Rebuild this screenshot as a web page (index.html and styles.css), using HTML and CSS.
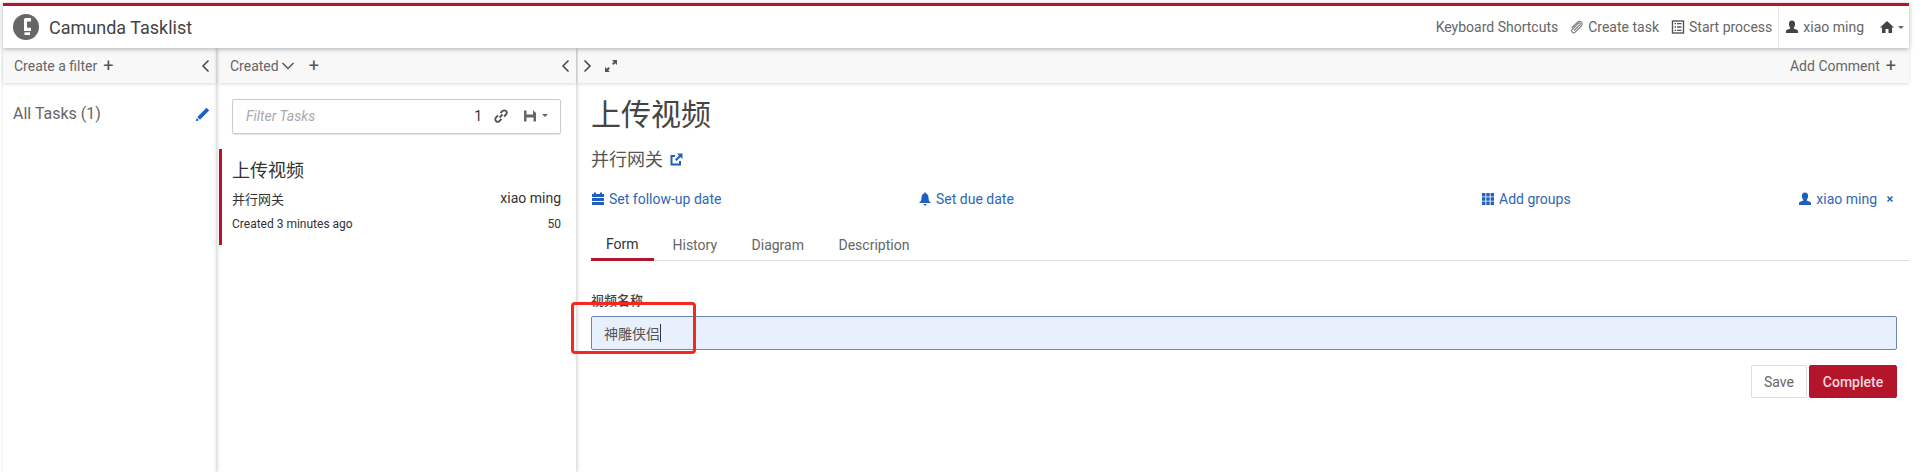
FILE: index.html
```html
<!DOCTYPE html>
<html lang="zh">
<head>
<meta charset="utf-8">
<title>Camunda Tasklist</title>
<link rel="stylesheet" href="styles.css">
</head>
<body>
<div class="app">
  <header class="top">
    <div class="brand">
      <svg class="logo" viewBox="0 0 26 26"><circle cx="13" cy="13" r="13" fill="#666"/><path d="M18 7.500V4H12.500Q11 4 11 5.500V17H18V13.800H14V7.500Z" fill="#fff"/><rect x="11.500" y="18.300" width="5.500" height="2.700" fill="#fff"/></svg>
      <span class="brand-name">Camunda Tasklist</span>
    </div>
    <nav class="top-nav">
      <span class="nav-item shortcuts">Keyboard Shortcuts</span>
      <span class="nav-item create">
        <svg class="ic" viewBox="0 0 14 14"><path d="M1.800 7.800 7.500 2.100a2.700 2.700 0 0 1 3.900 3.800L5.200 12.100a2 2 0 0 1-2.900-2.800L8.400 3.200a1 1 0 0 1 1.500 1.400L4 10.500" fill="none" stroke="#777" stroke-width="1.100"/></svg>
        Create task
      </span>
      <span class="nav-item start">
        <svg class="ic" viewBox="0 0 14 14"><rect x="1.500" y="1" width="11" height="12" fill="none" stroke="#555" stroke-width="1.400"/><path d="M3.500 3.700h1.500M3.500 7h1.500M3.500 10.300h1.500M6 3.700h4.500M6 7h4.500M6 10.300h4.500" stroke="#555" stroke-width="1.300"/></svg>
        Start process
      </span>
      <span class="nav-sep"></span>
      <span class="nav-item user">
        <svg class="ic" viewBox="0 0 14 14"><path d="M7 .5c2 0 3.100 1.500 3.100 3.500S9 7.400 8.600 8c0 1 3.900 1.400 4.400 2.800V13H1v-2.200C1.500 9.400 5.400 9 5.400 8 5 7.400 3.900 6 3.900 4S5 .5 7 .5Z" fill="#444"/></svg>
        xiao ming
      </span>
      <span class="nav-item home">
        <svg class="ic" viewBox="0 0 14 14"><path d="M7 1 14 7.500H12V13H8.500V9h-3v4H2V7.500H0Z" fill="#444"/></svg>
        <i class="caret"></i>
      </span>
    </nav>
  </header>
  <main class="cols">
    <section class="col filters">
      <div class="bar">
        <span>Create a filter</span><span class="plus">+</span>
        <svg class="chev push" viewBox="0 0 10 14"><path d="M7.500 1.500 2 7l5.500 5.500" fill="none" stroke="#444" stroke-width="1.500"/></svg>
      </div>
      <div class="filter-row">
        <span>All Tasks (1)</span>
        <svg class="pencil" viewBox="0 0 15 15"><path d="M11.500.8 14.200 3.500 5 12.700 2.300 10ZM1.700 11 4 13.300.7 14.300Z" fill="#1f5fbf"/></svg>
      </div>
    </section>
    <section class="col list">
      <div class="bar">
        <span>Created</span>
        <svg class="down" viewBox="0 0 14 10"><path d="M1.500 2 7 7.500 12.500 2" fill="none" stroke="#555" stroke-width="1.500"/></svg>
        <span class="plus wide">+</span>
        <svg class="chev push" viewBox="0 0 10 14"><path d="M7.500 1.500 2 7l5.500 5.500" fill="none" stroke="#444" stroke-width="1.500"/></svg>
      </div>
      <div class="search">
        <span class="search-ph">Filter Tasks</span>
        <span class="count">1</span>
        <svg class="ic link" viewBox="0 0 14 14"><path d="M5.500 8.500 8.500 5.500M6.500 4 8.500 2a2.400 2.400 0 0 1 3.500 3.500L10 7.500M7.500 10 5.500 12A2.400 2.400 0 0 1 2 8.500L4 6.500" fill="none" stroke="#555" stroke-width="1.800"/></svg>
        <svg class="ic floppy" viewBox="0 0 14 14"><path d="M1 1.500H10.500L13 4V12.500H1ZM3.500 1.500V5.500H10V1.500ZM3.500 8.500V12.500H10.500V8.500Z" fill="#666" fill-rule="evenodd"/></svg>
        <i class="caret"></i>
      </div>
      <article class="task">
        <h3 class="task-title">上传视频</h3>
        <div class="task-line"><span class="task-proc">并行网关</span><span>xiao ming</span></div>
        <div class="task-line small"><span>Created 3 minutes ago</span><span>50</span></div>
      </article>
    </section>
    <section class="col detail">
      <div class="bar">
        <svg class="chev" viewBox="0 0 10 14"><path d="M2.500 1.500 8 7l-5.500 5.500" fill="none" stroke="#444" stroke-width="1.500"/></svg>
        <svg class="expand" viewBox="0 0 14 14"><path d="M8 1h5v5l-1.800-1.800-1.700 1.700-1.400-1.400 1.700-1.700ZM6 13H1V8l1.800 1.800 1.700-1.700 1.400 1.400-1.700 1.700Z" fill="#555"/></svg>
        <span class="push">Add Comment</span><span class="plus">+</span>
      </div>
      <div class="task-body">
        <h1 class="title">上传视频</h1>
        <h2 class="subtitle">并行网关
          <svg class="ext" viewBox="0 0 14 14"><path d="M11 8v3.500H2.500V3H6" fill="none" stroke="#1f5fbf" stroke-width="2"/><path d="M8 .5h5.500V6l-2-2L7.500 8 6 6.500 10 2.500Z" fill="#1f5fbf"/></svg>
        </h2>
        <div class="meta">
          <span class="meta-item">
            <svg class="ic" viewBox="0 0 14 14"><path d="M1 2H3V.5H5V2H9V.5H11V2H13V5H1ZM1 6H13V13H1Z" fill="#1f5fbf"/><path d="M1 9.500H13" stroke="#fff"/></svg>
            Set follow-up date
          </span>
          <span class="meta-item">
            <svg class="ic" viewBox="0 0 14 14"><path d="M7 .5c.8 0 1 .5 1 1 2 .5 2.500 2.500 2.500 4.500S11.500 10 13 11H1c1.500-1 2.500-3 2.500-5S4 2 6 1.500c0-.5.200-1 1-1ZM5.500 12h3a1.500 1.500 0 0 1-3 0Z" fill="#1f5fbf"/></svg>
            Set due date
          </span>
          <span class="meta-item">
            <svg class="ic" viewBox="0 0 14 14"><path d="M1 1h3.400v3.400H1ZM5.300 1h3.400v3.400H5.300ZM9.600 1H13v3.400H9.600ZM1 5.300h3.400v3.400H1ZM5.300 5.300h3.400v3.400H5.300ZM9.600 5.300H13v3.400H9.600ZM1 9.600h3.400V13H1ZM5.300 9.600h3.400V13H5.300ZM9.600 9.600H13V13H9.600Z" fill="#1f5fbf"/></svg>
            Add groups
          </span>
          <span class="meta-item assignee">
            <svg class="ic" viewBox="0 0 14 14"><path d="M7 .5c2 0 3.100 1.500 3.100 3.500S9 7.400 8.600 8c0 1 3.900 1.400 4.400 2.800V13H1v-2.200C1.500 9.400 5.400 9 5.400 8 5 7.400 3.900 6 3.900 4S5 .5 7 .5Z" fill="#1f5fbf"/></svg>
            xiao ming
            <svg class="times" viewBox="0 0 8 8"><path d="M1.500 1.500l5 5M6.500 1.500l-5 5" stroke="#1f5fbf" stroke-width="1.500"/></svg>
          </span>
        </div>
        <div class="tabs">
          <span class="tab active">Form</span>
          <span class="tab">History</span>
          <span class="tab">Diagram</span>
          <span class="tab">Description</span>
        </div>
        <form class="form">
          <label class="field-label">视频名称</label>
          <div class="field-input">神雕侠侣<i class="cursor"></i></div>
          <div class="actions">
            <span class="btn">Save</span>
            <span class="btn primary">Complete</span>
          </div>
        </form>
      </div>
    </section>
  </main>
</div>
<div class="annotation"></div>
</body>
</html>
```

FILE: styles.css
```css
* { box-sizing: border-box; }
html, body { height: 100%; }
body {
  margin: 0;
  background: #fff;
  overflow: hidden;
  position: relative;
  font-family: Roboto, "Noto Sans CJK SC", sans-serif;
  font-size: 14px;
  color: #555;
}
.app {
  display: flex;
  flex-direction: column;
  height: 472px;
  padding: 3px 20px 0 3px;
}
svg { display: block; flex: none; }
.ic { width: 14px; height: 14px; }
.caret {
  display: block;
  flex: none;
  width: 0;
  height: 0;
  border-left: 3.500px solid transparent;
  border-right: 3.500px solid transparent;
  border-top: 3.500px solid #666;
}

.top {
  flex: none;
  height: 45px;
  display: flex;
  align-items: center;
  justify-content: space-between;
  border-top: 3px solid #b5152b;
  position: relative;
  z-index: 2;
  box-shadow: 0 1px 5px rgba(0, 0, 0, .3);
  background: #fff;
}
.brand { display: flex; align-items: center; padding-left: 10px; gap: 10px; }
.logo { width: 26px; height: 26px; }
.brand-name { font-size: 18px; color: #444; }
.top-nav { display: flex; align-items: center; height: 100%; font-size: 14px; color: #666; }
.nav-item { display: flex; align-items: center; gap: 4px; }
.create { margin-left: 12px; }
.start { margin-left: 12px; }
.nav-sep { width: 1px; height: 100%; background: #e6e6e6; margin: 0 6px; }
.home { margin-left: 16px; margin-right: 5px; }

.cols { flex: 1; display: flex; min-height: 0; }
.col { display: flex; flex-direction: column; min-width: 0; }
.filters { width: 213px; flex: none; box-shadow: 1px 0 4px rgba(0, 0, 0, .2); }
.list { width: 360px; flex: none; padding-left: 3px; box-shadow: 1px 0 4px rgba(0, 0, 0, .2); }
.detail { flex: 1; padding-left: 2px; }

.bar {
  flex: none;
  height: 35px;
  display: flex;
  align-items: center;
  background: #f8f8f8;
  box-shadow: 0 1px 3px rgba(0, 0, 0, .15);
  padding: 0 11px;
  color: #666;
}
.push { margin-left: auto; }
.plus { font-size: 18px; line-height: 1; margin-left: 6px; color: #555; }
.plus.wide { margin-left: 14px; }
.chev { width: 10px; height: 14px; }
.down { width: 14px; height: 10px; margin-left: 2px; }
.expand { width: 14px; height: 14px; margin-left: 12px; }
.detail .bar { padding: 0 13px 0 4px; }
.list .bar { padding: 0 5px 0 11px; }
.filters .bar { padding-right: 5px; }

.filter-row {
  display: flex;
  align-items: center;
  justify-content: space-between;
  margin-top: 21px;
  padding: 0 6px 0 10px;
  font-size: 16px;
  line-height: 20px;
  color: #666;
}
.pencil { width: 15px; height: 15px; }

.search {
  display: flex;
  align-items: center;
  height: 35px;
  margin: 16px 15px 0 13px;
  padding: 0 12px 2px 13px;
  border: 1px solid #ccc;
  border-radius: 2px;
  box-shadow: 0 1px 1px rgba(0, 0, 0, .1);
}
.search-ph { font-style: italic; color: #aaa; flex: 1; }
.count { color: #333; }
.link { margin-left: 12px; }
.floppy { margin-left: 15px; margin-right: 5px; }

.task {
  margin-top: 15px;
  height: 96px;
  border-left: 3px solid #b5152b;
  padding: 9px 15px 0 10px;
  color: #333;
}
.task-title { margin: 0; font-size: 18px; line-height: 26px; font-weight: 400; color: #333; }
.task-line { display: flex; justify-content: space-between; align-items: center; margin-top: 4px; height: 20px; font-size: 14px; }
.task-proc { font-size: 13px; }
.task-line.small { font-size: 12px; margin-top: 6px; }

.task-body { padding: 0 12px 0 13px; }
.title { margin: 14px 0 0; font-size: 30px; line-height: 36px; font-weight: 400; color: #444; }
.subtitle {
  display: flex;
  align-items: center;
  gap: 6px;
  margin: 14px 0 0;
  font-size: 18px;
  line-height: 26px;
  font-weight: 400;
  color: #555;
}
.ext { width: 14px; height: 14px; }
.meta {
  display: grid;
  grid-template-columns: 327px 563px 1fr auto;
  margin-top: 14px;
  height: 24px;
  align-items: center;
  color: #2f66b8;
}
.meta-item { display: flex; align-items: center; gap: 4px; }
.assignee { padding-right: 3px; }
.times { width: 8px; height: 8px; margin-left: 5px; }

.tabs {
  display: flex;
  margin: 17px -12px 0 0;
  height: 33px;
  border-bottom: 1px solid #ddd;
  gap: 2.500px;
}
.tab {
  display: flex;
  align-items: center;
  height: 33px;
  padding: 1px 16px 1px;
  color: #666;
}
.tab.active { width: 63px; color: #333; border-bottom: 3px solid #b5152b; padding: 1px 15px 0; }

.form { display: flex; flex-direction: column; }
.field-label { margin-top: 31px; height: 17px; font-size: 13px; line-height: 17px; font-weight: 500; color: #444; }
.field-input {
  display: flex;
  align-items: center;
  margin-top: 7px;
  height: 34px;
  padding-left: 12px;
  background: #e8f0fe;
  border: 1px solid #6c86ad;
  border-radius: 2px;
  font-size: 14px;
  color: #555;
}
.cursor { display: block; width: 1px; height: 18px; background: #333; }
.actions { display: flex; justify-content: flex-end; gap: 2px; margin-top: 15px; }
.btn {
  display: flex;
  align-items: center;
  justify-content: center;
  width: 56px;
  height: 33px;
  border: 1px solid #ddd;
  border-radius: 2px;
  background: #fff;
  color: #666;
}
.btn.primary { width: 88px; background: #b5152b; border-color: #b5152b; color: #f5d5db; font-weight: 500; }

.annotation {
  position: absolute;
  left: 571px;
  top: 302px;
  width: 125px;
  height: 52px;
  border: 3px solid #f5281e;
  border-radius: 4px;
}
```
